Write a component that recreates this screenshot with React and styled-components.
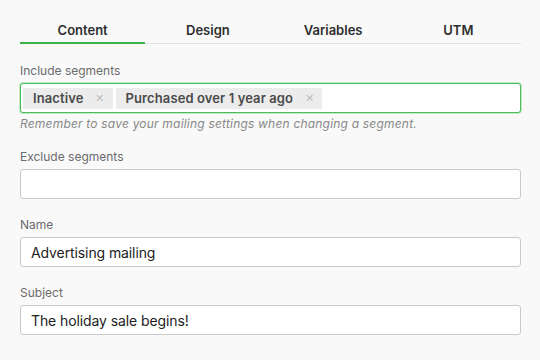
import React from "react";
import styled, { createGlobalStyle } from "styled-components";

const GlobalStyle = createGlobalStyle`
  html, body {
    margin: 0;
    background: #f9f9f9;
  }
  body {
    font-family: Inter, "Noto Sans", "Liberation Sans", sans-serif;
    color: #2b2b2b;
  }
`;

const Page = styled.div`
  padding: 0 19px 0 20px;
`;

const TabBar = styled.div`
  display: flex;
  border-bottom: 1px solid #e2e2e2;
`;

const Tab = styled.div`
  flex: 1;
  text-align: center;
  font-size: 13px;
  font-weight: 600;
  line-height: 16px;
  color: #2e2e2e;
  padding: 22px 0 4px;
  margin-bottom: -1px;
  border-bottom: 2px solid ${({ active }) => (active ? "#3cb44c" : "transparent")};
  cursor: pointer;
`;

const Form = styled.div`
  display: flex;
  flex-direction: column;
  gap: 18px;
  margin-top: 19px;
`;

const Field = styled.div`
  display: flex;
  flex-direction: column;
`;

const Label = styled.label`
  font-size: 12px;
  line-height: 16px;
  color: #6b6b6b;
  margin-bottom: 4px;
`;

const Box = styled.div`
  box-sizing: border-box;
  height: 30px;
  background: #fff;
  border: 1px solid ${({ focused }) => (focused ? "#49bd58" : "#c9c9c9")};
  border-radius: 3px;
  box-shadow: ${({ focused }) =>
    focused ? "0 0 0 1px rgba(73, 189, 88, 0.3)" : "none"};
  display: flex;
  align-items: center;
  gap: 3px;
  padding: 0 2px;
`;

const Input = styled.input`
  flex: 1;
  min-width: 0;
  height: 100%;
  border: none;
  outline: none;
  background: transparent;
  padding: 0 8px;
  font-family: inherit;
  font-size: 14px;
  letter-spacing: -0.1px;
  color: #222;
`;

const Chip = styled.span`
  display: inline-flex;
  align-items: center;
  height: 21px;
  padding: 0 8px 0 10px;
  background: #ececec;
  font-size: 13px;
  font-weight: 600;
  letter-spacing: 0.1px;
  color: #4a4a4a;
  white-space: nowrap;
`;

const Remove = styled.span`
  margin-left: 12px;
  font-size: 11px;
  font-weight: 400;
  color: #bdbdbd;
  cursor: pointer;
`;

const Hint = styled.div`
  margin-top: 4px;
  font-size: 12px;
  line-height: 14px;
  font-style: italic;
  letter-spacing: 0.2px;
  color: #888;
`;

const tabs = ["Content", "Design", "Variables", "UTM"];

const App = () => (
  <Page>
    <GlobalStyle />
    <TabBar>
      {tabs.map((t, i) => (
        <Tab key={t} active={i === 0}>
          {t}
        </Tab>
      ))}
    </TabBar>
    <Form>
      <Field>
        <Label>Include segments</Label>
        <Box focused>
          <Chip>
            Inactive<Remove>✕</Remove>
          </Chip>
          <Chip>
            Purchased over 1 year ago<Remove>✕</Remove>
          </Chip>
          <Input />
        </Box>
        <Hint>Remember to save your mailing settings when changing a segment.</Hint>
      </Field>
      <Field>
        <Label>Exclude segments</Label>
        <Box>
          <Input />
        </Box>
      </Field>
      <Field>
        <Label>Name</Label>
        <Box>
          <Input defaultValue="Advertising mailing" />
        </Box>
      </Field>
      <Field>
        <Label>Subject</Label>
        <Box>
          <Input defaultValue="The holiday sale begins!" />
        </Box>
      </Field>
    </Form>
  </Page>
);

export default App;
